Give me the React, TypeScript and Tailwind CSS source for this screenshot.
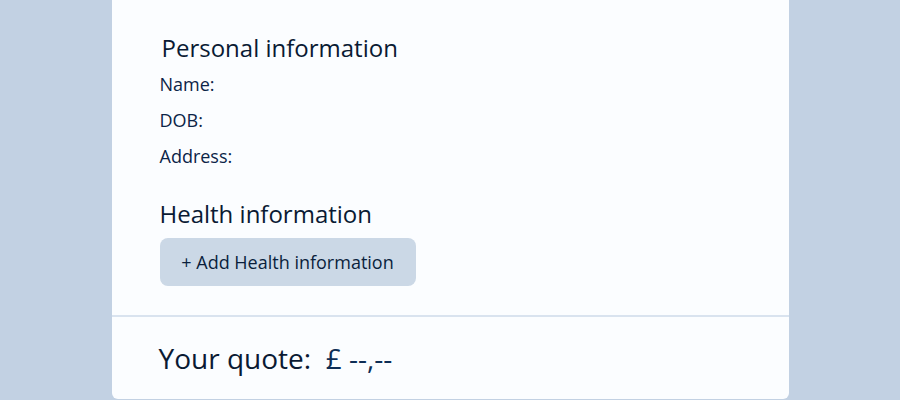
import React from "react";

export default function App() {
  return (
    <div
      className="w-[900px] h-[400px] bg-[#c2d1e3] flex justify-center overflow-hidden"
      style={{ fontFamily: '"Open Sans", sans-serif' }}
    >
      <div className="w-[677px] h-[399px] bg-[#fbfdff] rounded-b-md flex flex-col text-[#0a1a33]">
        <div className="pl-[48px] pt-[33px] flex flex-col">
          <h2 className="text-[24px] leading-[30px] pl-[2px]">Personal information</h2>
          <div className="mt-[3px] flex flex-col text-[18px] leading-[36px] text-[#0b2447]">
            <span>Name:</span>
            <span>DOB:</span>
            <span>Address:</span>
          </div>
          <h2 className="mt-[25px] text-[24px] leading-[30px]">Health information</h2>
          <div className="mt-[9px]">
            <button className="h-[48px] w-[256px] rounded-lg bg-[#cbd8e6] text-[18px] text-[#0a1f3d]">
              + Add Health information
            </button>
          </div>
        </div>
        <div className="mt-[29px] h-[2px] bg-[#d9e3ef]" />
        <div className="pl-[47px] pt-[23px] text-[28px] leading-[36px]">
          Your quote:&nbsp; <span className="text-[#0d2d55]">£ --,--</span>
        </div>
      </div>
    </div>
  );
}
